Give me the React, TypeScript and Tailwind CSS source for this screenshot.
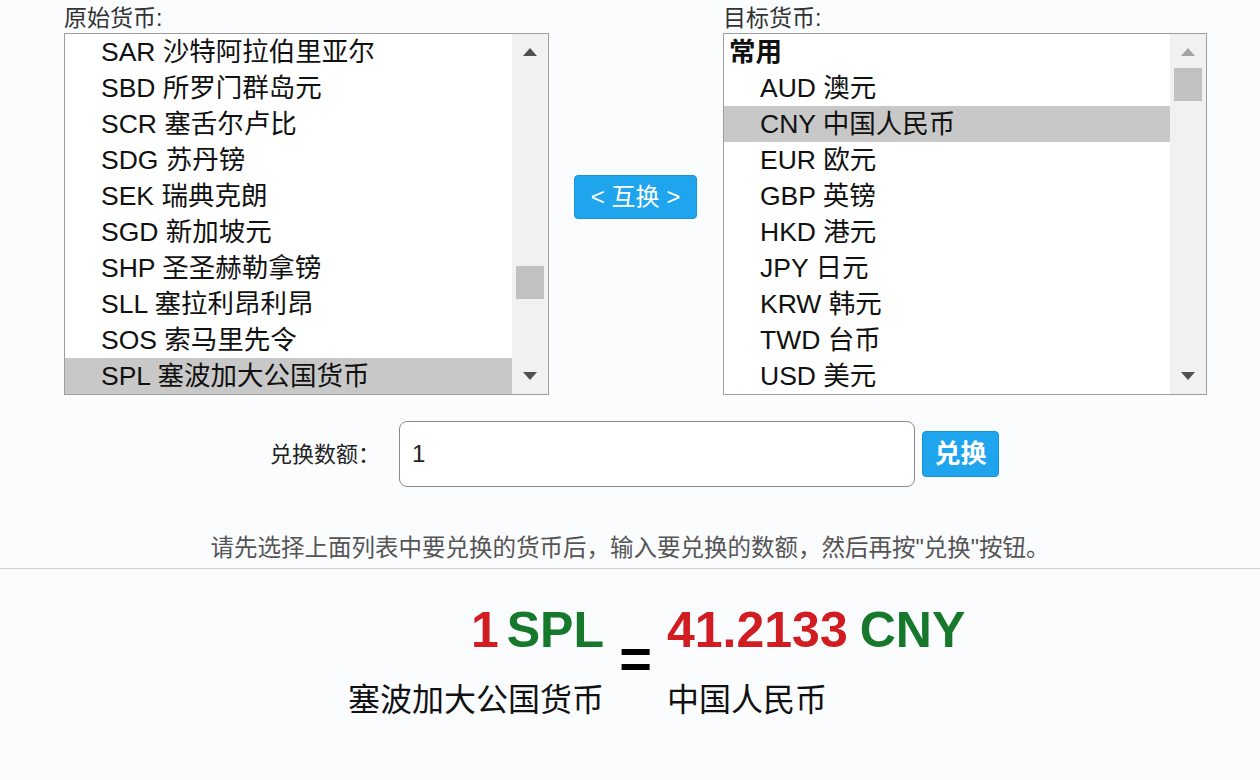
import React from 'react'

const fromList = [
  'SAR 沙特阿拉伯里亚尔',
  'SBD 所罗门群岛元',
  'SCR 塞舌尔卢比',
  'SDG 苏丹镑',
  'SEK 瑞典克朗',
  'SGD 新加坡元',
  'SHP 圣圣赫勒拿镑',
  'SLL 塞拉利昂利昂',
  'SOS 索马里先令',
  'SPL 塞波加大公国货币',
]

const toList = [
  'AUD 澳元',
  'CNY 中国人民币',
  'EUR 欧元',
  'GBP 英镑',
  'HKD 港元',
  'JPY 日元',
  'KRW 韩元',
  'TWD 台币',
  'USD 美元',
]

function Arrow({ up, dim }: { up?: boolean; dim?: boolean }) {
  return (
    <svg width="14" height="8" viewBox="0 0 14 8" className="block">
      <polygon
        points={up ? '7,0 14,8 0,8' : '0,0 14,0 7,8'}
        fill={dim ? '#a3a3a3' : '#505050'}
      />
    </svg>
  )
}

function Scrollbar({ thumbTop, upDim }: { thumbTop: number; upDim?: boolean }) {
  return (
    <div className="w-[36px] h-full bg-[#f1f1f1] flex flex-col items-center">
      <div className="h-[36px] flex items-center justify-center">
        <Arrow up dim={upDim} />
      </div>
      <div className="flex-1 w-full px-[4px]">
        <div
          className="w-full h-[33px] bg-[#c1c1c1]"
          style={{ marginTop: thumbTop }}
        />
      </div>
      <div className="h-[36px] flex items-center justify-center">
        <Arrow />
      </div>
    </div>
  )
}

function Row({ text, selected }: { text: string; selected?: boolean }) {
  return (
    <div
      className={`h-[36px] leading-[36px] pl-[36px] text-[26.5px] text-[#111] whitespace-nowrap ${
        selected ? 'bg-[#c8c8c8]' : ''
      }`}
    >
      {text}
    </div>
  )
}

export default function App() {
  return (
    <div className="w-[1260px] h-[780px] overflow-hidden bg-[#fbfcfe] font-['Liberation_Sans','Noto_Sans_CJK_SC',sans-serif]">
      {/* currency pickers */}
      <div className="flex pl-[64px] pt-[4px]">
        <div className="w-[485px]">
          <div className="h-[29px] leading-[29px] text-[23px] text-[#333]">原始货币:</div>
          <div className="h-[362px] border border-[#9e9e9e] bg-white flex">
            <div className="flex-1">
              {fromList.map((t, i) => (
                <Row key={t} text={t} selected={i === fromList.length - 1} />
              ))}
            </div>
            <Scrollbar thumbTop={196} />
          </div>
        </div>

        <div className="ml-[25px] pt-[171px]">
          <button className="w-[123px] h-[44px] rounded-[4px] bg-[#1fa5ee] border border-[#1895da] text-white text-[24px] leading-none">
            &lt; 互换 &gt;
          </button>
        </div>

        <div className="ml-[26px] w-[484px]">
          <div className="h-[29px] leading-[29px] text-[23px] text-[#333]">目标货币:</div>
          <div className="h-[362px] border border-[#9e9e9e] bg-white flex">
            <div className="flex-1">
              <div className="h-[36px] leading-[36px] pl-[5px] text-[26.5px] font-bold text-[#111]">常用</div>
              {toList.map((t, i) => (
                <Row key={t} text={t} selected={i === 1} />
              ))}
            </div>
            <Scrollbar thumbTop={-2} upDim />
          </div>
        </div>
      </div>

      {/* amount */}
      <div className="flex items-center mt-[26px] pl-[260px]">
        <div className="w-[120px] text-right text-[22px] text-[#222]">兑换数额：</div>
        <div className="ml-[19px] w-[516px] h-[66px] border border-[#8a8a8a] rounded-[8px] bg-white flex items-center pl-[12px] text-[24px] text-[#222]">
          1
        </div>
        <button className="ml-[7px] w-[77px] h-[46px] rounded-[4px] bg-[#1fa5ee] border border-[#1895da] text-white text-[26px] font-bold leading-none">
          兑换
        </button>
      </div>

      <div className="mt-[46px] h-[30px] leading-[30px] text-center text-[23.5px] text-[#555] whitespace-nowrap">
        请先选择上面列表中要兑换的货币后，输入要兑换的数额，然后再按"兑换"按钮。
      </div>

      <div className="mt-[5px] border-t border-[#d2d2d4]" />

      {/* result */}
      <div className="flex pl-[304px] mt-[36px]">
        <div className="w-[300px] flex flex-col items-end">
          <div className="h-[50px] leading-[50px] text-[50px] font-bold whitespace-nowrap">
            <span className="text-[#d11d22]">1</span>
            <span className="ml-[8px] text-[#16782a]">SPL</span>
          </div>
          <div className="mt-[25px] h-[40px] leading-[40px] text-[32px] text-[#111] whitespace-nowrap">
            塞波加大公国货币
          </div>
        </div>
        <div className="w-[63px] flex justify-center pt-[26px]">
          <span className="h-[56px] leading-[56px] text-[56px] font-bold text-black">=</span>
        </div>
        <div className="flex flex-col items-start">
          <div className="h-[50px] leading-[50px] text-[50px] font-bold whitespace-nowrap">
            <span className="text-[#d11d22]">41.2133</span>
            <span className="ml-[12px] text-[#16782a]">CNY</span>
          </div>
          <div className="mt-[25px] h-[40px] leading-[40px] text-[32px] text-[#111] whitespace-nowrap">
            中国人民币
          </div>
        </div>
      </div>
    </div>
  )
}
